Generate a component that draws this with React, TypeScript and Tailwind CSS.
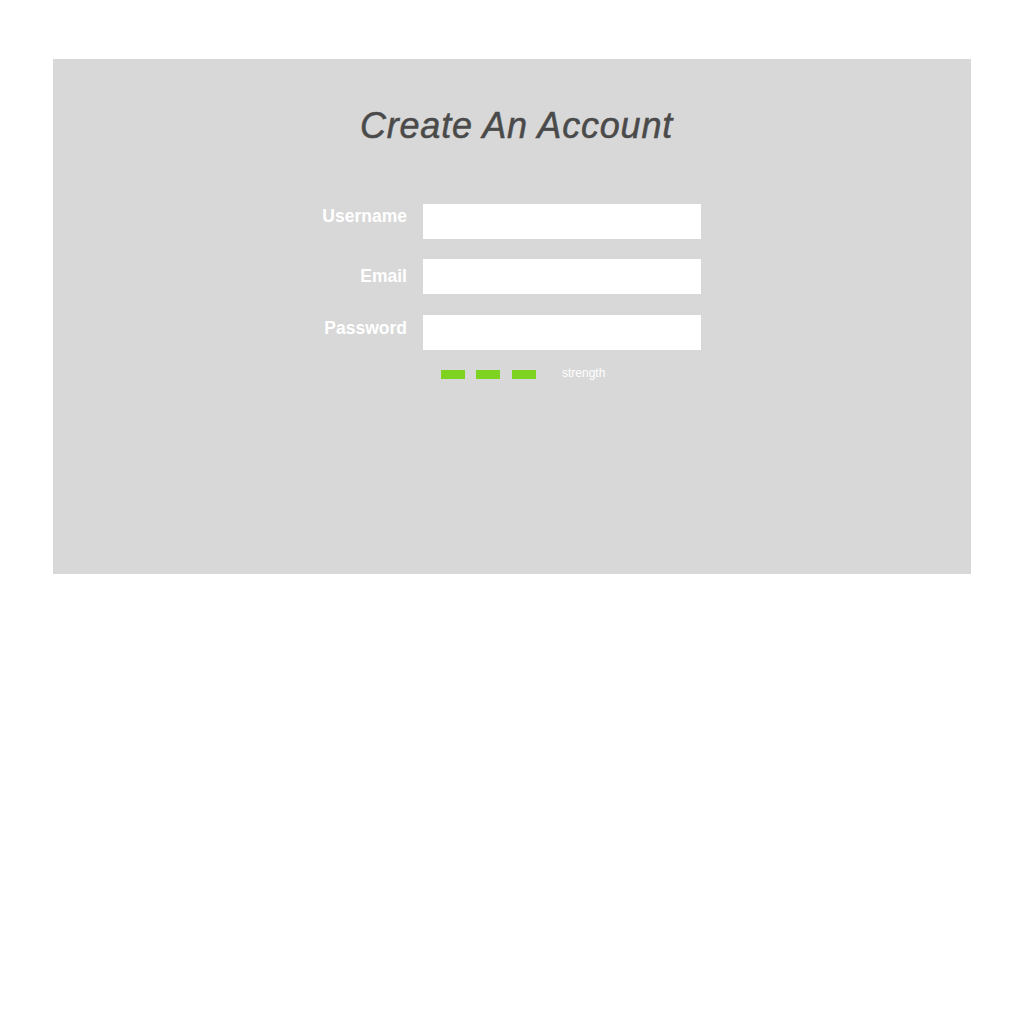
const fields = [
    { label: 'Username', type: 'text', row: 'mt-[60px]', offset: 'mt-[4px]' },
    { label: 'Email', type: 'email', row: 'mt-[20px]', offset: 'mt-[9px]' },
    { label: 'Password', type: 'password', row: 'mt-[21px]', offset: 'mt-[5px]' },
]

export default function App() {
    return (
        <div className="min-h-screen bg-white pt-[59px] font-['Liberation_Sans',Arial,sans-serif]">
            <section className="mx-auto w-[918px] h-[515px] bg-[#d8d8d8] pt-[49px]">
                {/* Title */}
                <h1 className="text-center text-[36px] leading-none italic tracking-[0.8px] text-[#4a4a4a] [-webkit-text-stroke:0.5px_#4a4a4a] pl-[9px]">
                    Create An Account
                </h1>

                {/* Form */}
                <form className="pl-[244px] flex flex-col">
                    {fields.map((f) => (
                        <div key={f.label} className={`flex items-start gap-4 ${f.row}`}>
                            <label
                                className={`w-[110px] text-right text-[17.5px] leading-none font-bold text-white ${f.offset}`}
                            >
                                {f.label}
                            </label>
                            <input
                                type={f.type}
                                className="w-[278px] h-[35px] bg-white border-0 outline-none px-2"
                            />
                        </div>
                    ))}

                    {/* Strength meter */}
                    <div className="mt-[17px] flex items-start pl-[144px]">
                        <span className="mt-[3px] w-6 h-[9px] bg-[#7ed321]" />
                        <span className="mt-[3px] ml-[11px] w-6 h-[9px] bg-[#7ed321]" />
                        <span className="mt-[3px] ml-3 w-6 h-[9px] bg-[#7ed321]" />
                        <span className="ml-[26px] text-xs leading-none text-white">strength</span>
                    </div>
                </form>
            </section>
        </div>
    )
}
